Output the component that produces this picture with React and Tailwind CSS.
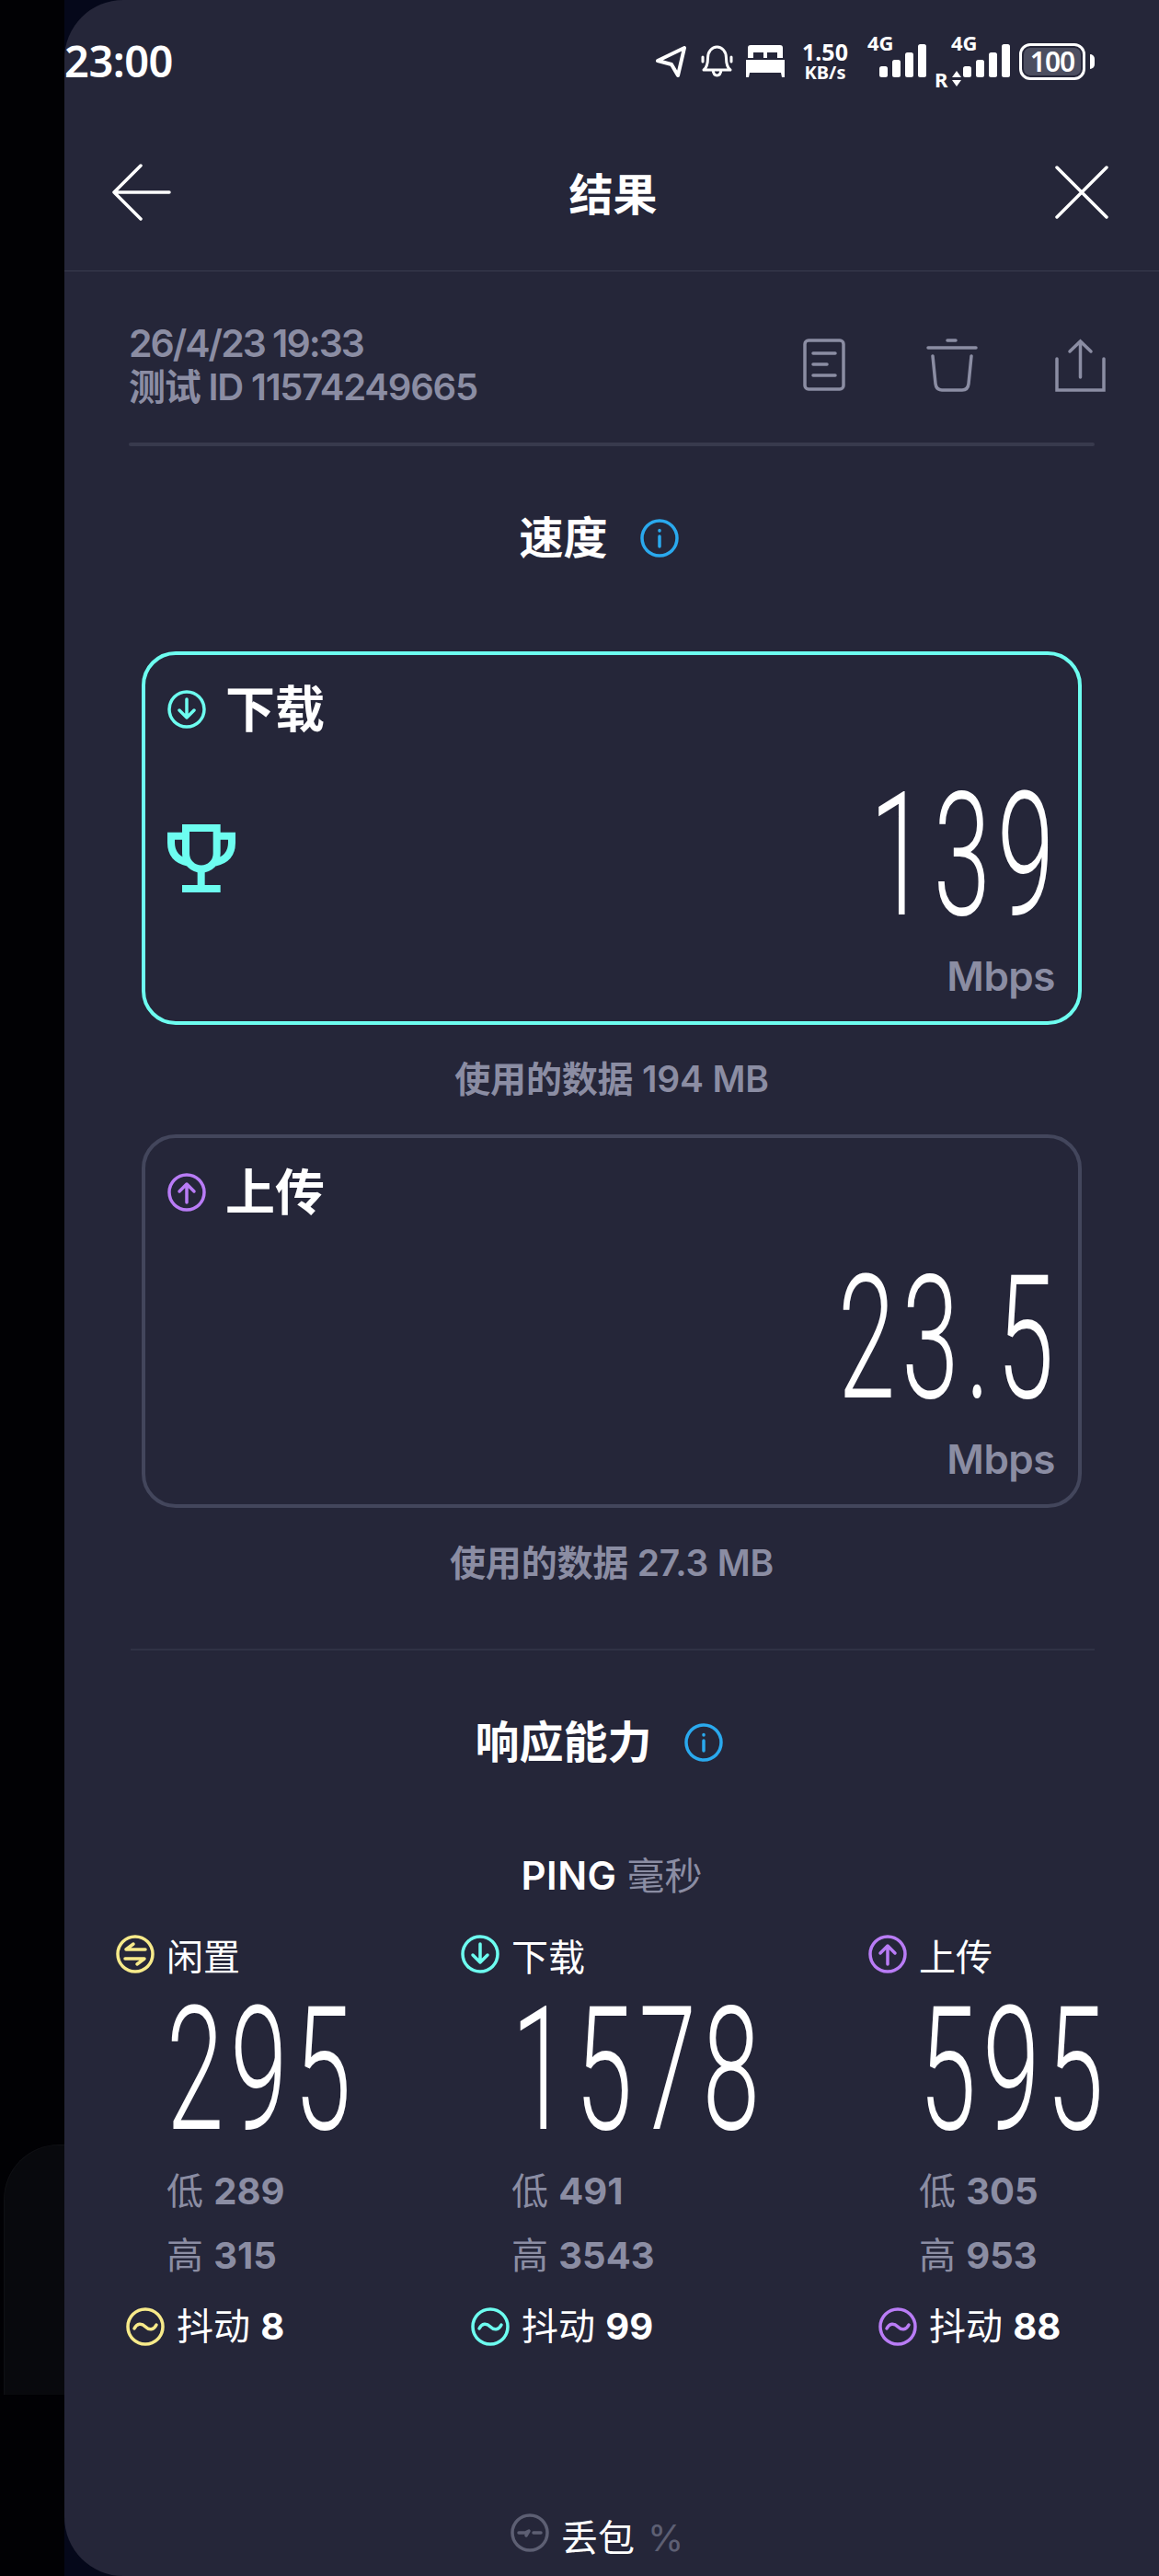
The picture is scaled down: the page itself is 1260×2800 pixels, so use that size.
import React from 'react';

const CYAN = '#6dfdf0';
const PURPLE = '#b97cf6';
const YELLOW = '#f7ea8a';
const GREY = '#8b8da3';

function Ring({ color, children }) {
  return (
    <svg width="42" height="42" viewBox="0 0 42 42" fill="none" stroke={color} strokeWidth="3.500" strokeLinecap="round" strokeLinejoin="round" className="shrink-0">
      <circle cx="21" cy="21" r="19" />
      {children}
    </svg>
  );
}
const Down = () => <Ring color={CYAN}><path d="M21 10v20M13 22l8 8 8-8" /></Ring>;
const Up = () => <Ring color={PURPLE}><path d="M21 32V12M13 20l8-8 8 8" /></Ring>;
const Idle = () => <Ring color={YELLOW}><path d="M32 16H11l8-6M10 26h21l-8 6" /></Ring>;
const Wave = ({ color }) => <Ring color={color}><path d="M9 23c3-6 8-6 12-2s9 4 12-2" /></Ring>;
const Loss = () => <Ring color="#5d5f73"><path d="M9 21h7l4-2-3 5M25 21h8" /></Ring>;

function Info() {
  return (
    <svg width="42" height="42" viewBox="0 0 42 42" fill="none" stroke="#2aa9ee" strokeWidth="3.500" strokeLinecap="round" className="shrink-0">
      <circle cx="21" cy="21" r="19" />
      <path d="M21 19v11" />
      <path d="M21 12.500v.5" />
    </svg>
  );
}

function Trophy() {
  return (
    <svg width="74" height="74" viewBox="0 0 222 222" fill="none" stroke={CYAN} strokeWidth="24" className="shrink-0">
      <path d="M60 12H161V95a50 50 0 0 1-101 0Z" />
      <path d="M60 38H12V60c0 40 25 58 55 65M161 38h49V60c0 40-25 58-55 65" />
      <path d="M110 150V205M48 210H173" />
    </svg>
  );
}

function Bars({ className }) {
  return (
    <svg width="51" height="36" viewBox="0 0 51 36" fill="white" className={className}>
      <rect x="0" y="24" width="9" height="12" rx="2.500" />
      <rect x="14" y="17" width="9" height="19" rx="2.500" />
      <rect x="28" y="9" width="9" height="27" rx="2.500" />
      <rect x="42" y="0" width="9" height="36" rx="2.500" />
    </svg>
  );
}

function StatusBar() {
  return (
    <div className="flex h-[130px] items-start justify-between pr-[70px] pt-[38px]">
      <div className="mt-[-1px] font-['Noto_Sans',sans-serif] text-[47px] font-semibold leading-[58px] tracking-[-0.5px] text-white">23:00</div>
      <div className="flex items-start">
        <svg width="33" height="35" viewBox="0 0 33 35" fill="none" stroke="white" strokeWidth="4" strokeLinejoin="round" className="mt-[11px]">
          <path d="M2 17 31 3 24 33 17 21Z" />
        </svg>
        <svg width="35" height="35" viewBox="0 0 35 35" fill="none" stroke="white" strokeWidth="3" strokeLinejoin="round" strokeLinecap="round" className="ml-[16px] mt-[11px]">
          <path d="M3 27c4-3 4.500-7 4.500-13 0-7 4.500-12 10-12s10 5 10 12c0 6 .5 10 4.500 13ZM13 27c.5 4 2 6 4.500 6s4-2 4.500-6M2 13v5M33 13v5" />
        </svg>
        <svg width="42" height="35" viewBox="0 0 42 35" fill="white" className="ml-[14px] mt-[11px]">
          <path d="M5 0h32a3 3 0 0 1 3 3v11h-6V8H23v6h-4V8H8v6H2V3a3 3 0 0 1 3-3ZM0 16h42v19h-3l-1-5H4l-1 5H0Z" />
        </svg>
        <div className="ml-[19px] mt-[6px] flex w-[50px] flex-col items-center font-['Noto_Sans',sans-serif] font-bold text-white">
          <span className="text-[25px] leading-[25px]">1.50</span>
          <span className="text-[20px] leading-[20px]">KB/s</span>
        </div>
        <div className="relative ml-[21px] h-[56px] w-[64px]">
          <span className="absolute left-0 top-[-4px] font-['Noto_Sans',sans-serif] text-[22px] font-bold leading-[24px] text-white">4G</span>
          <Bars className="absolute left-[13px] top-[10px]" />
        </div>
        <div className="relative ml-[9px] h-[56px] w-[82px]">
          <span className="absolute left-[18px] top-[-4px] font-['Noto_Sans',sans-serif] text-[22px] font-bold leading-[24px] text-white">4G</span>
          <span className="absolute left-0 top-[37px] font-['Noto_Sans',sans-serif] text-[22px] font-bold leading-[22px] text-white">R</span>
          <svg width="10" height="17" viewBox="0 0 10 17" fill="white" className="absolute left-[19px] top-[39px]">
            <path d="M5 0l5 7H0ZM0 10h10l-5 7Z" />
          </svg>
          <Bars className="absolute left-[31px] top-[10px]" />
        </div>
        <div className="ml-[10px] mt-[9px] flex h-[40px] w-[72px] items-center justify-center rounded-[12px] border-[3px] border-white p-[2px]">
          <div className="flex h-full w-full items-center justify-center rounded-[7px] bg-[#4c4e60] font-['Noto_Sans',sans-serif] text-[30px] font-semibold leading-none tracking-[-1px] text-white">100</div>
        </div>
        <div className="ml-[5px] mt-[21px] h-[16px] w-[5px] rounded-r-full bg-white" />
      </div>
    </div>
  );
}

function Header() {
  return (
    <div className="flex h-[165px] items-center justify-between border-b border-[#3a3c4f] pb-[6px] pl-[52px] pr-[55px]">
      <svg width="64" height="62" viewBox="0 0 64 62" fill="none" stroke="white" strokeWidth="3.500" strokeLinecap="round" strokeLinejoin="round">
        <path d="M62 31H2M31 2 2 31l29 29" />
      </svg>
      <div className="mt-[6px] text-[48px] font-bold leading-[60px] text-white">结果</div>
      <svg width="58" height="58" viewBox="0 0 58 58" fill="none" stroke="white" strokeWidth="3.500" strokeLinecap="round">
        <path d="M2 2 56 56M56 2 2 56" />
      </svg>
    </div>
  );
}

function Meta() {
  return (
    <div className="pl-[70px]">
      <div className="flex h-[186px] items-start justify-between pr-[58px] pt-[55px]">
        <div className="font-semibold leading-[47px] text-[#8b8da3]">
          <div className="text-[41px] tracking-[-2px]">26/4/23 19:33</div>
          <div className="text-[40px] tracking-[-1.200px]">测试 ID 11574249665</div>
        </div>
        <div className="mt-[18px] flex items-start text-[#8b8da3]">
          <svg width="46" height="57" viewBox="0 0 46 57" fill="none" stroke={GREY} strokeWidth="3.500" strokeLinecap="round">
            <rect x="2" y="2" width="42" height="53" rx="4" />
            <path d="M11 16h24M11 28h15M11 40h24" />
          </svg>
          <svg width="56" height="58" viewBox="0 0 56 58" fill="none" stroke={GREY} strokeWidth="3.500" strokeLinecap="round" className="ml-[88px]">
            <path d="M23 2h9M2 10h52M7 19l3 30c.5 5 3 7 7 7h22c4 0 6.500-2 7-7l3-30" />
          </svg>
          <svg width="55" height="58" viewBox="0 0 55 58" fill="none" stroke={GREY} strokeWidth="3.500" strokeLinecap="round" className="ml-[84px]">
            <path d="M27.500 42V3M16 14 27.500 3 39 14M2 22V56H53V22" />
          </svg>
        </div>
      </div>
      <div className="h-[4px] w-[1050px] rounded-full bg-[#383a4d]" />
    </div>
  );
}

function Heading({ children }) {
  return (
    <div className="flex items-center justify-center gap-[35px] pr-[28px]">
      <div className="text-[48px] font-bold leading-[60px] text-white">{children}</div>
      <Info />
    </div>
  );
}

function Number({ children, origin }) {
  return (
    <div className={`${origin} w-fit scale-x-[0.6] font-['Roboto',sans-serif] text-[187px] font-light leading-[133px] tracking-[11.700px] text-white`}>
      {children}
    </div>
  );
}

function SpeedCard({ icon, title, border, value, trophy, used, usedClass }) {
  return (
    <div className="ml-[84px] w-[1022px]">
      <div className={`h-[406px] rounded-[37px] border-4 ${border} pl-[24px] pr-[25px] pt-[36px]`}>
        <div className="flex items-center gap-[21px]">
          {icon}
          <div className="mt-[3px] text-[54px] font-bold leading-[42px] text-white">{title}</div>
        </div>
        <div className="mt-[68px] flex h-[136px] items-center justify-between">
          <div className="mt-[7px]">{trophy}</div>
          <div className="mr-[-6px] mt-[3px]"><Number origin="origin-right">{value}</Number></div>
        </div>
        <div className="mt-[41px] text-right text-[44px] font-semibold leading-[46px] tracking-[-0.5px] text-[#8b8da3]">Mbps</div>
      </div>
      <div className={`text-center text-[39px] font-semibold leading-[46px] tracking-[-0.2px] text-[#8b8da3] ${usedClass}`}>{used}</div>
    </div>
  );
}

function PingCol({ icon, label, value, low, high, wave, jitter }) {
  return (
    <div>
      <div className="flex h-[46px] items-start gap-[13px]">
        {icon}
        <span className="mt-[2px] text-[40px] leading-[46px] text-white">{label}</span>
      </div>
      <div className="ml-[55px] mt-[35px]"><Number origin="origin-left">{value}</Number></div>
      <div className="ml-[55px] mt-[42px] text-[40px] leading-[46px] text-[#8b8da3]">低 <span className="text-[40px] font-bold">{low}</span></div>
      <div className="ml-[55px] mt-[24px] text-[40px] leading-[46px] text-[#8b8da3]">高 <span className="text-[40px] font-bold">{high}</span></div>
      <div className="ml-[11px] mt-[31px] flex h-[46px] items-center gap-[13px] text-[40px] leading-[46px] text-white">
        {wave}
        <span>抖动 <span className="text-[40px] font-bold">{jitter}</span></span>
      </div>
    </div>
  );
}

export default function App() {
  return (
    <div className="flex h-[2800px] w-[1260px] overflow-hidden bg-[#010104] font-['Inter','Noto_Sans_CJK_SC',sans-serif]">
      <div className="w-[70px] shrink-0 pl-[4px] pt-[2331px]">
        <div className="h-[272px] rounded-tl-[60px] border-l border-t border-[#0f1014] bg-[#08090d]" />
      </div>
      <div className="h-[2800px] w-[1190px] shrink-0 bg-[#05081a]">
        <div className="h-[2800px] rounded-l-[64px] bg-[#252639]">
          <StatusBar />
          <Header />
          <Meta />
          <div className="mt-[70px]"><Heading>速度</Heading></div>
          <div className="mt-[93px]">
            <SpeedCard icon={<Down />} title="下载" border="border-[#6dfdf0]" value="139" trophy={<Trophy />} used="使用的数据 194 MB" usedClass="mt-[36px]" />
          </div>
          <div className="mt-[37px]">
            <SpeedCard icon={<Up />} title="上传" border="border-[#43465c]" value="23.5" used="使用的数据 27.3 MB" usedClass="mt-[37px]" />
          </div>
          <div className="ml-[72px] mt-[70px] h-[2px] w-[1048px] bg-[#303245]" />
          <div className="mt-[70px]"><Heading>响应能力</Heading></div>
          <div className="mt-[92px] text-center text-[42px] font-semibold leading-[46px] tracking-[0.5px] text-white">
            PING <span className="text-[41px] font-normal tracking-normal text-[#8b8da3]">毫秒</span>
          </div>
          <div className="mt-[41px] grid grid-cols-[375px_443px_1fr] pl-[56px]">
            <PingCol icon={<Idle />} label="闲置" value="295" low="289" high="315" wave={<Wave color={YELLOW} />} jitter="8" />
            <PingCol icon={<Down />} label="下载" value="1578" low="491" high="3543" wave={<Wave color={CYAN} />} jitter="99" />
            <PingCol icon={<Up />} label="上传" value="595" low="305" high="953" wave={<Wave color={PURPLE} />} jitter="88" />
          </div>
          <div className="mt-[180px] flex items-start pl-[485px]">
            <Loss />
            <span className="ml-[13px] mt-[4px] text-[40px] leading-[46px] text-white">丢包</span>
            <span className="ml-[14px] mt-[4px] text-[40px] font-normal leading-[46px] text-[#5d5f73]">%</span>
          </div>
        </div>
      </div>
    </div>
  );
}
